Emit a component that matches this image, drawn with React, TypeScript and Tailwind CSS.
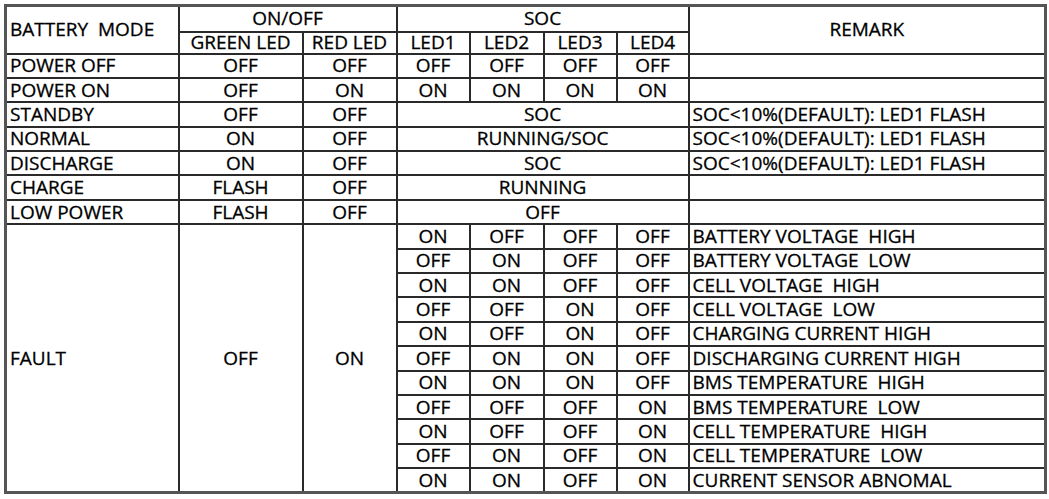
import React from "react";

const cell = "border-2 border-[#2a2a2a] p-0 leading-none";
const mid = `${cell} text-center`;
const left = `${cell} text-left pl-[3px] whitespace-pre`;

const simpleRows = [
  { mode: "POWER OFF", g: "OFF", r: "OFF", leds: ["OFF", "OFF", "OFF", "OFF"], remark: "" },
  { mode: "POWER ON", g: "OFF", r: "ON", leds: ["ON", "ON", "ON", "ON"], remark: "" },
  { mode: "STANDBY", g: "OFF", r: "OFF", soc: "SOC", remark: "SOC<10%(DEFAULT): LED1 FLASH" },
  { mode: "NORMAL", g: "ON", r: "OFF", soc: "RUNNING/SOC", remark: "SOC<10%(DEFAULT): LED1 FLASH" },
  { mode: "DISCHARGE", g: "ON", r: "OFF", soc: "SOC", remark: "SOC<10%(DEFAULT): LED1 FLASH" },
  { mode: "CHARGE", g: "FLASH", r: "OFF", soc: "RUNNING", remark: "" },
  { mode: "LOW POWER", g: "FLASH", r: "OFF", soc: "OFF", remark: "" },
];

const faults = [
  { leds: ["ON", "OFF", "OFF", "OFF"], remark: "BATTERY VOLTAGE  HIGH" },
  { leds: ["OFF", "ON", "OFF", "OFF"], remark: "BATTERY VOLTAGE  LOW" },
  { leds: ["ON", "ON", "OFF", "OFF"], remark: "CELL VOLTAGE  HIGH" },
  { leds: ["OFF", "OFF", "ON", "OFF"], remark: "CELL VOLTAGE  LOW" },
  { leds: ["ON", "OFF", "ON", "OFF"], remark: "CHARGING CURRENT HIGH" },
  { leds: ["OFF", "ON", "ON", "OFF"], remark: "DISCHARGING CURRENT HIGH" },
  { leds: ["ON", "ON", "ON", "OFF"], remark: "BMS TEMPERATURE  HIGH" },
  { leds: ["OFF", "OFF", "OFF", "ON"], remark: "BMS TEMPERATURE  LOW" },
  { leds: ["ON", "OFF", "OFF", "ON"], remark: "CELL TEMPERATURE  HIGH" },
  { leds: ["OFF", "ON", "OFF", "ON"], remark: "CELL TEMPERATURE  LOW" },
  { leds: ["ON", "ON", "OFF", "ON"], remark: "CURRENT SENSOR ABNOMAL" },
];

export default function App() {
  return (
    <div
      className="w-[1049px] h-[499px] bg-white pl-[4px] pt-[4px] text-black text-[19px] [-webkit-text-stroke:0.3px_black]"
      style={{ fontFamily: '"Open Sans", "Noto Sans", sans-serif' }}
    >
      <table className="border-collapse table-fixed w-[1040px] border-[3px] border-[#555]">
        <colgroup>
          <col className="w-[173px]" />
          <col className="w-[124px]" />
          <col className="w-[94px]" />
          <col className="w-[73px]" />
          <col className="w-[74px]" />
          <col className="w-[73px]" />
          <col className="w-[72px]" />
          <col className="w-[357px]" />
        </colgroup>
        <tbody>
          <tr className="h-[26px]">
            <td rowSpan={2} className={left}>BATTERY  MODE</td>
            <td colSpan={2} className={mid}>ON/OFF</td>
            <td colSpan={4} className={mid}>SOC</td>
            <td rowSpan={2} className={mid}>REMARK</td>
          </tr>
          <tr className="h-[22px]">
            <td className={mid}>GREEN LED</td>
            <td className={mid}>RED LED</td>
            <td className={mid}>LED1</td>
            <td className={mid}>LED2</td>
            <td className={mid}>LED3</td>
            <td className={mid}>LED4</td>
          </tr>
          {simpleRows.map((row) => (
            <tr key={row.mode} className="h-[24.4px]">
              <td className={left}>{row.mode}</td>
              <td className={mid}>{row.g}</td>
              <td className={mid}>{row.r}</td>
              {row.leds ? (
                row.leds.map((l, i) => (
                  <td key={i} className={mid}>{l}</td>
                ))
              ) : (
                <td colSpan={4} className={mid}>{row.soc}</td>
              )}
              <td className={left}>{row.remark}</td>
            </tr>
          ))}
          {faults.map((f, idx) => (
            <tr key={f.remark} className="h-[24.4px]">
              {idx === 0 && (
                <>
                  <td rowSpan={11} className={left}>FAULT</td>
                  <td rowSpan={11} className={mid}>OFF</td>
                  <td rowSpan={11} className={mid}>ON</td>
                </>
              )}
              {f.leds.map((l, i) => (
                <td key={i} className={mid}>{l}</td>
              ))}
              <td className={left}>{f.remark}</td>
            </tr>
          ))}
        </tbody>
      </table>
    </div>
  );
}
